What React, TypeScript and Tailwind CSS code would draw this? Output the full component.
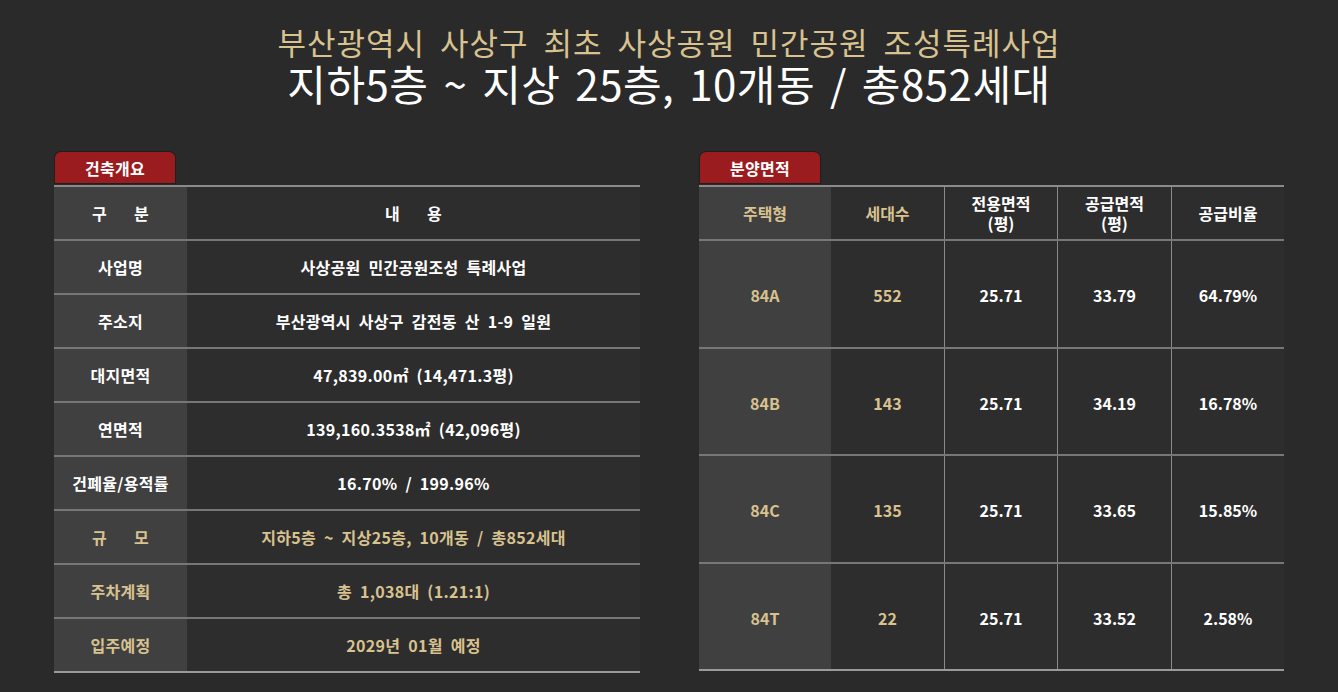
import React from "react";

const gold = "text-[#d8c28f]";

const overview = [
  { label: "사업명", value: "사상공원 민간공원조성 특례사업", hl: false },
  { label: "주소지", value: "부산광역시 사상구 감전동 산 1-9 일원", hl: false },
  { label: "대지면적", value: "47,839.00㎡ (14,471.3평)", hl: false },
  { label: "연면적", value: "139,160.3538㎡ (42,096평)", hl: false },
  { label: "건폐율/용적률", value: "16.70% / 199.96%", hl: false },
  { label: ["규", "모"], value: "지하5층 ~ 지상25층, 10개동 / 총852세대", hl: true },
  { label: "주차계획", value: "총 1,038대 (1.21:1)", hl: true },
  { label: "입주예정", value: "2029년 01월 예정", hl: true },
];

const units = [
  { type: "84A", count: "552", net: "25.71", supply: "33.79", ratio: "64.79%" },
  { type: "84B", count: "143", net: "25.71", supply: "34.19", ratio: "16.78%" },
  { type: "84C", count: "135", net: "25.71", supply: "33.65", ratio: "15.85%" },
  { type: "84T", count: "22", net: "25.71", supply: "33.52", ratio: "2.58%" },
];

function Tab({ title }: { title: string }) {
  return (
    <div className="w-[120px] h-[31px] rounded-t-[6px] bg-[#9b1c1f] ring-1 ring-[#1f1f1f] flex items-center justify-center text-white text-[16px] font-bold tracking-[0.3px]">
      {title}
    </div>
  );
}

// label text that is spread out across the cell, e.g. "구   분"
function Spread({ parts }: { parts: string[] }) {
  return (
    <span className="flex gap-[27px]">
      {parts.map((p) => (
        <span key={p}>{p}</span>
      ))}
    </span>
  );
}

export default function App() {
  return (
    <div
      className="w-[1338px] h-[692px] bg-[#2a2a2a] overflow-hidden"
      style={{ fontFamily: '"Noto Sans CJK KR", "Noto Sans", sans-serif' }}
    >
      {/* title */}
      <div className="pt-[24px] flex flex-col items-center">
        <p className={`${gold} text-[31px] leading-[36px] tracking-[1px] [word-spacing:7px]`}>
          부산광역시 사상구 최초 사상공원 민간공원 조성특례사업
        </p>
        <p className="text-white text-[42px] leading-[46px] tracking-[0.5px] [word-spacing:5px]">
          지하5층 ~ 지상 25층, 10개동 / 총852세대
        </p>
      </div>

      <div className="mt-[46px] px-[54px] flex justify-between">
        {/* 건축개요 */}
        <div className="w-[586px]">
          <div className="pl-px">
            <Tab title="건축개요" />
          </div>
          <div className="mt-[2px] border-t-2 border-[#8a8a8a] border-b-2 border-b-[#9a9a9a] text-[16px] font-bold tracking-[0.3px] [word-spacing:4px]">
            <div className="grid grid-cols-[133px_1fr] h-[52px]">
              <div className="bg-[#404040] text-white flex items-center justify-center">
                <Spread parts={["구", "분"]} />
              </div>
              <div className="bg-[#2d2d2d] text-white flex items-center justify-center">
                <Spread parts={["내", "용"]} />
              </div>
            </div>
            {overview.map((r) => (
              <div
                key={r.value}
                className="grid grid-cols-[133px_1fr] h-[54px] border-t-2 border-[#777777]"
              >
                <div
                  className={`bg-[#404040] flex items-center justify-center ${
                    r.hl ? gold : "text-white"
                  }`}
                >
                  {Array.isArray(r.label) ? <Spread parts={r.label} /> : r.label}
                </div>
                <div
                  className={`bg-[#2d2d2d] flex items-center justify-center ${
                    r.hl ? gold : "text-white"
                  }`}
                >
                  {r.value}
                </div>
              </div>
            ))}
          </div>
        </div>

        {/* 분양면적 */}
        <div className="w-[585px]">
          <div className="pl-px">
            <Tab title="분양면적" />
          </div>
          <div className="mt-[2px] border-t-2 border-[#8a8a8a] border-b-2 border-b-[#9a9a9a] text-[16px] font-bold">
            <div className="grid grid-cols-[132px_113px_113px_114px_1fr] h-[52px] leading-[20px] text-center">
              <div className={`bg-[#404040] ${gold} flex items-center justify-center`}>주택형</div>
              <div className={`bg-[#2d2d2d] ${gold} flex items-center justify-center`}>세대수</div>
              <div className="bg-[#2d2d2d] text-white flex items-center justify-center border-l border-[#8a8a8a]">
                전용면적
                <br />
                (평)
              </div>
              <div className="bg-[#2d2d2d] text-white flex items-center justify-center border-l border-[#8a8a8a]">
                공급면적
                <br />
                (평)
              </div>
              <div className="bg-[#2d2d2d] text-white flex items-center justify-center border-l border-[#8a8a8a]">
                공급비율
              </div>
            </div>
            {units.map((u) => (
              <div
                key={u.type}
                className="grid grid-cols-[132px_113px_113px_114px_1fr] h-[107.5px] border-t-2 border-[#777777]"
              >
                <div className={`bg-[#404040] ${gold} flex items-center justify-center pt-[3px]`}>{u.type}</div>
                <div className={`bg-[#2d2d2d] ${gold} flex items-center justify-center pt-[3px]`}>{u.count}</div>
                <div className="bg-[#2d2d2d] text-white flex items-center justify-center pt-[3px] border-l border-[#8a8a8a]">
                  {u.net}
                </div>
                <div className="bg-[#2d2d2d] text-white flex items-center justify-center pt-[3px] border-l border-[#8a8a8a]">
                  {u.supply}
                </div>
                <div className="bg-[#2d2d2d] text-white flex items-center justify-center pt-[3px] border-l border-[#8a8a8a]">
                  {u.ratio}
                </div>
              </div>
            ))}
          </div>
        </div>
      </div>
    </div>
  );
}
